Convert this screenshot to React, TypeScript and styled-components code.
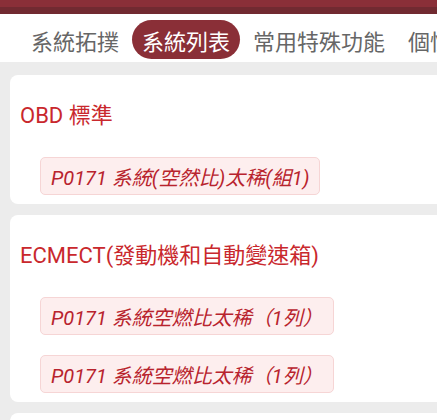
import React from "react";
import styled, { createGlobalStyle } from "styled-components";

const Global = createGlobalStyle`
  html, body { margin: 0; padding: 0; }
  body {
    width: 437px;
    height: 420px;
    overflow: hidden;
    background: #ececec;
    font-family: Roboto, "Noto Sans CJK TC", "Noto Sans", sans-serif;
  }
`;

const Page = styled.div`
  display: flex;
  flex-direction: column;
  width: 437px;
  height: 420px;
  overflow: hidden;
  background: #ececec;
`;

const TopBar = styled.div`
  display: flex;
  flex-direction: column;
  flex-shrink: 0;
`;

const BarBand = styled.div<{ $dark?: boolean }>`
  height: 7px;
  background: ${(p) => (p.$dark ? "#712a31" : "#8a2f38")};
`;

const TabRow = styled.div`
  display: flex;
  align-items: flex-start;
  gap: 3px;
  height: 48px;
  padding: 6px 0 0 21px;
  box-sizing: border-box;
  background: #ffffff;
  white-space: nowrap;
  overflow: hidden;
  flex-shrink: 0;
`;

const Tab = styled.div<{ $active?: boolean }>`
  display: flex;
  align-items: center;
  height: 39px;
  padding: 0 10px;
  border-radius: 20px;
  font-size: 22px;
  color: ${(p) => (p.$active ? "#ffffff" : "#666666")};
  background: ${(p) => (p.$active ? "#8a2f37" : "transparent")};
  flex-shrink: 0;
`;

const List = styled.div`
  display: flex;
  flex-direction: column;
  gap: 11px;
  padding: 13px 0 0 10px;
`;

const Card = styled.div<{ $stub?: boolean }>`
  display: flex;
  flex-direction: column;
  width: 470px;
  min-height: ${(p) => (p.$stub ? "60px" : "0")};
  padding: 0 10px 9px;
  box-sizing: border-box;
  background: #ffffff;
  border-radius: 8px;
`;

const Title = styled.div`
  display: flex;
  align-items: center;
  height: 76px;
  margin-bottom: 6px;
  font-size: 22px;
  color: #c9282d;
`;

const Chips = styled.div`
  display: flex;
  flex-direction: column;
  align-items: flex-start;
  gap: 20px;
  padding-left: 20px;
`;

const Chip = styled.div`
  display: flex;
  align-items: center;
  height: 38px;
  padding: 0 10px;
  box-sizing: border-box;
  background: #fdeeee;
  border: 1px solid #f6d5d5;
  border-radius: 5px;
  font-size: 20px;
  font-style: italic;
  color: #b8232d;
`;

const tabs = ["系統拓撲", "系統列表", "常用特殊功能", "個性化設定"];

const groups = [
  { title: "OBD 標準", codes: ["P0171 系統(空然比)太稀(組1)"] },
  {
    title: "ECMECT(發動機和自動變速箱)",
    codes: ["P0171 系統空燃比太稀（1列）", "P0171 系統空燃比太稀（1列）"],
  },
];

export default function App() {
  return (
    <>
      <Global />
      <Page>
        <TopBar>
          <BarBand />
          <BarBand $dark />
        </TopBar>
        <TabRow>
          {tabs.map((t, i) => (
            <Tab key={t} $active={i === 1}>
              {t}
            </Tab>
          ))}
        </TabRow>
        <List>
          {groups.map((g) => (
            <Card key={g.title}>
              <Title>{g.title}</Title>
              <Chips>
                {g.codes.map((c, i) => (
                  <Chip key={i}>{c}</Chip>
                ))}
              </Chips>
            </Card>
          ))}
          <Card $stub />
        </List>
      </Page>
    </>
  );
}
